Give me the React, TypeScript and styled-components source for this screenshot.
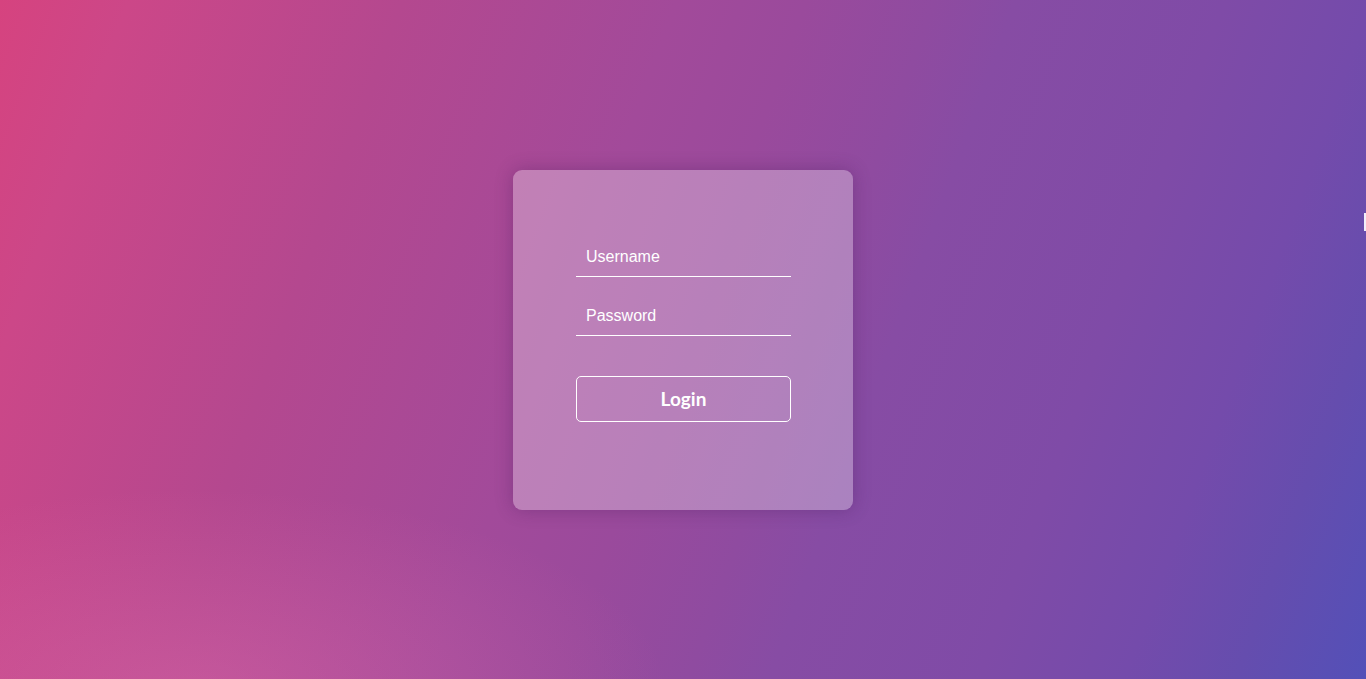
import React from "react";
import styled, { createGlobalStyle } from "styled-components";

const Global = createGlobalStyle`
  html, body { margin: 0; padding: 0; height: 100%; }
  body { font-family: "Liberation Sans", Arial, sans-serif; overflow: hidden; }
  #root { height: 100%; }
`;

const Page = styled.div`
  position: relative;
  width: 100vw;
  height: 100vh;
  display: flex;
  align-items: center;
  justify-content: center;
  background:
    radial-gradient(ellipse 35% 30% at 14% 102%, rgba(236, 115, 175, 0.35), rgba(236, 115, 175, 0) 100%),
    linear-gradient(
      110deg,
      #d6437f 0%,
      #cc4788 8%,
      #b4488f 25%,
      #a24a9a 42%,
      #9a4a9c 50%,
      #8f4ba0 58%,
      #874ca4 63%,
      #7f4ba7 76%,
      #744bab 85%,
      #654dae 92%,
      #5350b8 100%
    );
`;

const Card = styled.form`
  width: 340px;
  height: 340px;
  box-sizing: border-box;
  padding: 67px 62px 0 63px;
  display: flex;
  flex-direction: column;
  border-radius: 9px;
  background: rgba(255, 255, 255, 0.3);
  box-shadow: 0 0 18px rgba(60, 20, 80, 0.3);
`;

const Field = styled.input`
  height: 40px;
  box-sizing: border-box;
  width: 215px;
  padding: 2px 10px 0;
  margin-bottom: 19px;
  border: none;
  border-bottom: 1px solid #ffffff;
  background: transparent;
  color: #fff;
  font-family: "Liberation Sans", Arial, sans-serif;
  font-size: 16px;
  outline: none;
  &::placeholder { color: #fff; opacity: 1; }
`;

const Button = styled.button`
  margin-top: 21px;
  width: 215px;
  height: 46px;
  box-sizing: border-box;
  border: 1px solid #fff;
  border-radius: 5px;
  background: transparent;
  color: #fff;
  font-family: Lato, "Open Sans", sans-serif;
  font-weight: 700;
  font-size: 19px;
  cursor: pointer;
`;

const EdgeMark = styled.div`
  position: absolute;
  right: 0;
  top: 213px;
  width: 2px;
  height: 18px;
  background: #f2eefa;
`;

export default function App() {
  return (
    <>
      <Global />
      <Page>
        <Card onSubmit={(e) => e.preventDefault()}>
          <Field type="text" placeholder="Username" />
          <Field type="password" placeholder="Password" />
          <Button type="submit">Login</Button>
        </Card>
        <EdgeMark />
      </Page>
    </>
  );
}
